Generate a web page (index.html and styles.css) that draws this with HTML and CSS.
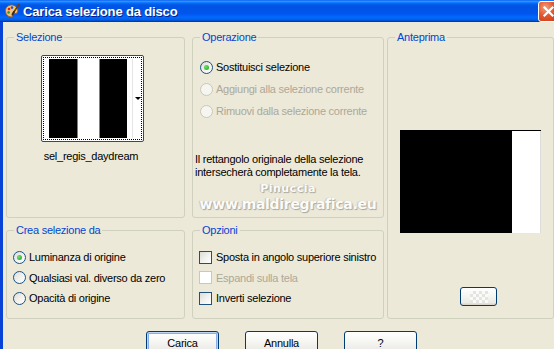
FILE: index.html
```html
<!DOCTYPE html>
<html lang="it">
<head>
  <meta charset="UTF-8">
  <title>Carica selezione da disco</title>
  <link rel="stylesheet" href="styles.css">
</head>
<body>
  <div class="window">
    <div class="titlebar">
      <svg class="app-icon" width="16" height="16" viewBox="0 0 16 16">
        <path d="M7.5 2C3.8 2 1.5 4.6 1.5 7.8c0 3.4 2.5 6.2 5.6 6.2 1.2 0 1.5-.7 1.1-1.5-.5-.9 0-1.8 1.1-1.8h1.5c1.9 0 3-1.1 3-3C13.8 4.4 11 2 7.5 2z" fill="#f0c27a" stroke="#9a5a22" stroke-width="1"/>
        <circle cx="5" cy="6" r="1.3" fill="#e02020"/>
        <circle cx="8" cy="4.6" r="1.3" fill="#2050e0"/>
        <circle cx="4.6" cy="9.4" r="1.3" fill="#20a040"/>
        <circle cx="11" cy="6" r="1.2" fill="#f8e020"/>
        <path d="M15 1.5 9.5 9.5" stroke="#6a3a12" stroke-width="1.6" stroke-linecap="round"/>
        <path d="M10 9 8.6 11.2" stroke="#3a2a1a" stroke-width="2" stroke-linecap="round"/>
      </svg>
      <span class="title">Carica selezione da disco</span>
      <button class="close" type="button">
        <svg width="13" height="13" viewBox="0 0 13 13"><path d="M2.5 2.5l8 8M10.5 2.5l-8 8" stroke="#fff" stroke-width="2.2" stroke-linecap="square"/></svg>
      </button>
    </div>

    <div class="dialog">
      <div class="groups">
        <fieldset class="group selezione">
          <legend>Selezione</legend>
          <div class="thumb">
            <div class="focus">
              <div class="stripes"></div>
              <div class="arrow"></div>
            </div>
          </div>
          <div class="thumb-name">sel_regis_daydream</div>
        </fieldset>

        <fieldset class="group operazione">
          <legend>Operazione</legend>
          <div class="options">
            <label class="opt"><span class="radio checked"></span>Sostituisci selezione</label>
            <label class="opt disabled"><span class="radio"></span>Aggiungi alla selezione corrente</label>
            <label class="opt disabled"><span class="radio"></span>Rimuovi dalla selezione corrente</label>
          </div>
          <p class="note">Il rettangolo originale della selezione<br>intersecherà completamente la tela.</p>
          <div class="watermark">
            <span class="wm-name">Pinuccia</span>
            <span class="wm-site">www.maldiregrafica.eu</span>
          </div>
        </fieldset>

        <fieldset class="group anteprima">
          <legend>Anteprima</legend>
          <div class="preview"></div>
          <button class="btn preview-btn" type="button"><span class="checker"></span></button>
        </fieldset>

        <fieldset class="group crea">
          <legend>Crea selezione da</legend>
          <div class="options compact">
            <label class="opt"><span class="radio checked"></span>Luminanza di origine</label>
            <label class="opt"><span class="radio"></span>Qualsiasi val. diverso da zero</label>
            <label class="opt"><span class="radio"></span>Opacità di origine</label>
          </div>
        </fieldset>

        <fieldset class="group opzioni">
          <legend>Opzioni</legend>
          <div class="options compact">
            <label class="opt check"><span class="checkbox"></span>Sposta in angolo superiore sinistro</label>
            <label class="opt check disabled"><span class="checkbox"></span>Espandi sulla tela</label>
            <label class="opt check"><span class="checkbox"></span>Inverti selezione</label>
          </div>
        </fieldset>
      </div>

      <div class="buttons">
        <button class="btn default" type="button">Carica</button>
        <button class="btn" type="button">Annulla</button>
        <button class="btn" type="button">?</button>
      </div>
    </div>
  </div>
</body>
</html>
```

FILE: styles.css
```css
* {
  box-sizing: border-box;
  margin: 0;
  padding: 0;
}

html, body {
  width: 554px;
  height: 349px;
  overflow: hidden;
  background: #ece9d8;
}

body {
  font-family: "Liberation Sans", Arial, sans-serif;
  font-size: 11px;
  letter-spacing: -0.25px;
  color: #000;
}

.window {
  width: 564px;
  height: 349px;
  overflow: hidden;
  display: flex;
  flex-direction: column;
}

/* title bar */
.titlebar {
  height: 22px;
  flex: none;
  display: flex;
  align-items: center;
  padding-left: 4px;
  background: linear-gradient(to bottom,
    #0058ee 0%, #3593ff 5%, #288eff 8%, #127dff 11%, #036ffc 14%,
    #0262ee 18%, #0057e5 24%, #0054e3 30%, #0055eb 58%, #005bf5 68%,
    #026afe 78%, #0062ef 87%, #0052d6 93%, #0040ab 97%, #003092 100%);

  & > .app-icon {
    flex: none;
  }

  & > .title {
    margin-left: 3px;
    font-size: 13px;
    font-weight: bold;
    letter-spacing: -0.15px;
    color: #fff;
    text-shadow: 1px 1px 0 #0a1e88;
    flex: 1;
  }

  & > .close {
    width: 21px;
    height: 21px;
    margin-right: 5px;
    border: 1px solid #fff;
    border-radius: 3px;
    background: radial-gradient(circle at 35% 30%, #f0a080 0%, #e4572e 45%, #c23a14 100%);
    display: flex;
    align-items: center;
    justify-content: center;
  }
}

/* dialog body */
.dialog {
  flex: 1;
  border-left: 3px solid #0842d6;
  border-right: 3px solid #0842d6;
  padding: 9px 0 0 3px;
}

.groups {
  display: grid;
  grid-template-columns: 179px 7px 192px 3px 167px;
  grid-template-rows: 187px 95px;
  row-gap: 6px;
}

.group {
  border: 1px solid #d0d0bf;
  border-radius: 3px;
  padding: 0;
  min-width: 0;
  display: flex;
  flex-direction: column;

  & > legend {
    margin-left: 7px;
    padding: 0 2px;
    line-height: 13px;
    color: #0046d5;
  }
}

.selezione { grid-column: 1; grid-row: 1; }
.operazione { grid-column: 3; grid-row: 1; }
.anteprima { grid-column: 5; grid-row: 1 / 3; }
.crea { grid-column: 1; grid-row: 2; }
.opzioni { grid-column: 3; grid-row: 2; }

/* selection thumbnail */
.selezione {
  & > .thumb {
    margin: 11px 0 0 34px;
    width: 103px;
    height: 87px;
    padding: 1px;
    border: 1px solid #2b4a78;
    border-radius: 2px;
    background: #fff;

    & > .focus {
      height: 100%;
      border: 1px dotted #000;
      display: flex;
      align-items: center;
      padding: 1px 0 1px 1px;

      & > .stripes {
        width: 89px;
        height: 79px;
        background: linear-gradient(to right,
          #fff 0 4px, #000 4px 32px, #808080 32px 33px, #fff 33px 54px,
          #808080 54px 55px, #000 55px 82px, #fff 82px 87px, #e6e6e6 87px 89px);
      }

      & > .arrow {
        margin-left: 2px;
        width: 0;
        height: 0;
        border-left: 3px solid transparent;
        border-right: 3px solid transparent;
        border-top: 3px solid #000;
      }
    }
  }

  & > .thumb-name {
    margin-top: 8px;
    padding-right: 9px;
    line-height: 13px;
    text-align: center;
  }
}

/* radio & check rows */
.options {
  display: flex;
  flex-direction: column;
  padding: 12px 0 0 7px;

  &.compact {
    padding: 10px 0 0 6px;

    & > .opt {
      height: 20.5px;
    }
  }

  & > .opt {
    height: 22px;
    display: flex;
    align-items: center;
    gap: 3px;
    white-space: nowrap;

    &.check {
      gap: 4px;
    }

    &.disabled {
      color: #aca899;
    }
  }
}

.radio {
  width: 13px;
  height: 13px;
  flex: none;
  border: 1px solid #1c5180;
  border-radius: 50%;
  background: linear-gradient(135deg, #dcdcd7 0%, #f2f2ef 55%, #fff 100%);
  display: flex;
  align-items: center;
  justify-content: center;

  &.checked::after {
    content: "";
    width: 5px;
    height: 5px;
    border-radius: 50%;
    background: radial-gradient(circle at 35% 35%, #6de06a, #21a121);
  }

  .disabled & {
    border-color: #cac8bb;
    background: #f6f5ef;
  }
}

.checkbox {
  width: 13px;
  height: 13px;
  flex: none;
  border: 1px solid #1c5180;
  background: linear-gradient(135deg, #dcdcd7 0%, #f2f2ef 55%, #fff 100%);

  .disabled & {
    border-color: #cac8bb;
    background: #fff;
  }
}

.operazione {
  & > .note {
    margin: 31px 0 0 2px;
    line-height: 12.5px;
  }

  & > .watermark {
    margin-top: 4px;
    display: flex;
    flex-direction: column;
    align-items: center;
    font-family: "DejaVu Sans", sans-serif;
    font-weight: bold;
    color: #fbfbf9;
    text-shadow: 1px 1px 1px #a8a69c, -1px 0 1px #c4c2b8;

    & > .wm-name {
      font-size: 11px;
      line-height: 14px;
      letter-spacing: 0.5px;
    }

    & > .wm-site {
      font-size: 14px;
      line-height: 17px;
      letter-spacing: -0.3px;
    }
  }
}

/* preview */
.anteprima {
  & > .preview {
    margin: 86px 0 0 12px;
    width: 141px;
    height: 103px;
    border-top: 1px solid #000;
    background: linear-gradient(to right, #000 0 112px, #fff 112px 140px, #dcdcdc 140px);
  }

  & > .preview-btn {
    margin: 54px 0 0 72px;
    width: 37px;
    height: 19px;
    display: flex;
    align-items: center;
    justify-content: center;

    & > .checker {
      width: 18px;
      height: 12px;
      background: repeating-conic-gradient(#e4e4e0 0 25%, #fafaf8 0 50%) 0 0 / 6px 6px;
    }
  }
}

/* buttons */
.btn {
  font-family: inherit;
  font-size: 11px;
  letter-spacing: -0.25px;
  color: #000;
  border: 1px solid #003c74;
  border-radius: 3px;
  background: linear-gradient(to bottom, #fff 0%, #f7f7f4 40%, #ecebe6 85%, #d6d0c5 100%);
}

.buttons {
  display: flex;
  gap: 26px;
  padding: 12px 0 0 140px;

  & > .btn {
    width: 73px;
    height: 23px;
    flex: none;
  }

  & > .default {
    box-shadow: inset 0 0 0 1px #bcd4f6, inset 0 0 0 2px #89ade4;
  }
}
```
